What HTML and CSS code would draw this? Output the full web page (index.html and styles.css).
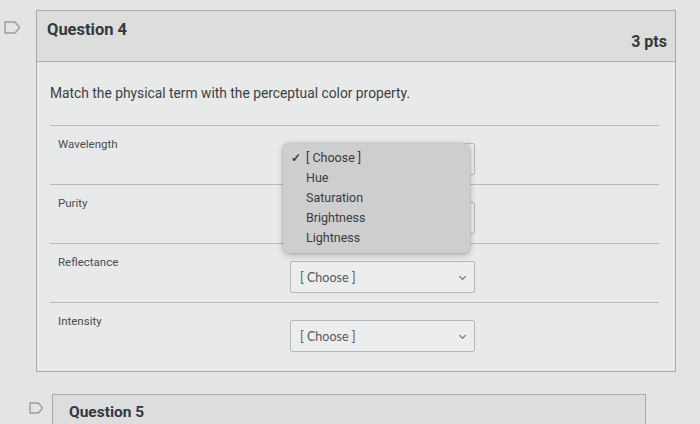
FILE: index.html
```html
<!DOCTYPE html>
<html>
<head>
<meta charset="utf-8">
<link rel="stylesheet" href="styles.css">
</head>
<body>
<div class="page">
  <div class="question q4">
    <svg class="flag" width="17" height="13" viewBox="0 0 17 13"><path d="M1 1 H11 L15.5 6.5 L11 12 H1 Z" fill="none" stroke="#9a9c9d" stroke-width="1.4" stroke-linejoin="round"/></svg>
    <div class="card">
      <div class="card-header">
        <span class="q-title">Question 4</span>
        <span class="pts">3 pts</span>
      </div>
      <div class="card-body">
        <p class="prompt">Match the physical term with the perceptual color property.</p>
        <div class="rows">
          <div class="row">
            <span class="term">Wavelength</span>
            <div class="select"><span class="chev"></span></div>
            <ul class="menu">
              <li class="checked"><span class="check">✓</span>[ Choose ]</li>
              <li>Hue</li>
              <li>Saturation</li>
              <li>Brightness</li>
              <li>Lightness</li>
            </ul>
          </div>
          <div class="row">
            <span class="term">Purity</span>
            <div class="select"><span class="chev"></span></div>
          </div>
          <div class="row">
            <span class="term">Reflectance</span>
            <div class="select"><span>[ Choose ]</span><span class="chev"></span></div>
          </div>
          <div class="row">
            <span class="term">Intensity</span>
            <div class="select"><span>[ Choose ]</span><span class="chev"></span></div>
          </div>
        </div>
      </div>
    </div>
  </div>
  <div class="question q5">
    <svg class="flag" width="15" height="12" viewBox="0 0 15 12"><path d="M1 1 H9.5 L13.5 6 L9.5 11 H1 Z" fill="none" stroke="#9a9c9d" stroke-width="1.4" stroke-linejoin="round"/></svg>
    <div class="card">
      <div class="card-header">
        <span class="q-title small">Question 5</span>
      </div>
    </div>
  </div>
</div>
</body>
</html>
```

FILE: styles.css
```css
html, body {
  margin: 0;
  padding: 0;
  background: #e3e5e4;
  font-family: Roboto, "Liberation Sans", Arial, sans-serif;
  color: #3b3e44;
  overflow: hidden;
}

.page {
  width: 700px;
  height: 424px;
  padding-top: 10px;
  box-sizing: border-box;
}

.question {
  display: flex;
  align-items: flex-start;
}

.q4 {
  padding-left: 4px;
}

.q4 .flag {
  margin-top: 11px;
  margin-right: 15px;
}

.q4 .card {
  width: 640px;
}

.q5 {
  margin-top: 22px;
  padding-left: 29px;
}

.q5 .flag {
  margin-top: 8px;
  margin-right: 8px;
}

.q5 .card {
  width: 594px;
  border-bottom: none;
}

.flag {
  flex: none;
}

.card {
  border: 1px solid #a9abaa;
  background: #e8eae9;
  box-sizing: border-box;
}

.card-header {
  height: 51px;
  background: #dcdedd;
  border-bottom: 1px solid #acaead;
  display: flex;
  justify-content: space-between;
  align-items: flex-start;
  padding: 0 8px 0 10px;
  box-sizing: border-box;
}

.q5 .card-header {
  height: 40px;
  border-bottom: none;
  padding-left: 16px;
}

.q-title {
  font-size: 16.5px;
  font-weight: 700;
  color: #35383d;
  margin-top: 9px;
}

.q-title.small {
  font-size: 15.5px;
  margin-top: 8px;
}

.pts {
  font-size: 16px;
  font-weight: 700;
  color: #35383d;
  margin-top: 21px;
}

.card-body {
  padding: 21px 16px 10px 13px;
}

.prompt {
  margin: 0 0 22px 0;
  font-size: 13.8px;
  line-height: 20px;
  color: #3c3e43;
}

.row {
  position: relative;
  height: 59px;
  border-top: 1px solid #b9bbba;
  display: flex;
  align-items: flex-start;
  box-sizing: border-box;
}

.term {
  width: 240px;
  flex: none;
  padding-left: 8px;
  padding-top: 10px;
  font-size: 11.5px;
  line-height: 16px;
  color: #4a4c50;
  box-sizing: border-box;
}

.select {
  margin-top: 17px;
  width: 185px;
  height: 32px;
  border: 1px solid #b7b9b8;
  border-radius: 2px;
  background: #eceeed;
  box-sizing: border-box;
  display: flex;
  align-items: center;
  justify-content: space-between;
  padding: 0 9px 0 9px;
  font-family: Lato, "Open Sans", sans-serif;
  font-size: 12.5px;
  color: #55575b;
}

.chev {
  width: 4px;
  height: 4px;
  margin-left: auto;
  border-right: 1.2px solid #666;
  border-bottom: 1.2px solid #666;
  transform: rotate(45deg);
  margin-top: -2px;
}

.menu {
  position: absolute;
  left: 233px;
  top: 17px;
  width: 187px;
  margin: 0;
  padding: 5px 0;
  list-style: none;
  background: #cdcecd;
  border-radius: 6px;
  box-shadow: 0 2px 6px rgba(0, 0, 0, 0.25), 0 0 0 1px rgba(0, 0, 0, 0.06);
  font-family: Roboto, "Liberation Sans", sans-serif;
  font-size: 12.5px;
  line-height: 20px;
  color: #3a3b3e;
  z-index: 2;
}

.menu li {
  padding-left: 23px;
  position: relative;
}

.check {
  position: absolute;
  left: 8px;
  font-size: 12px;
  font-weight: 700;
}
```
